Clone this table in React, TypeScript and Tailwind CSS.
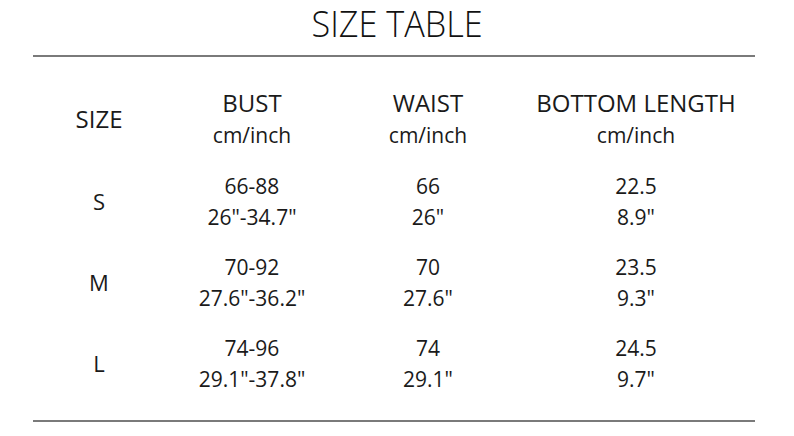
const rows = [
  { size: "S", bust: ["66-88", '26"-34.7"'], waist: ["66", '26"'], bottom: ["22.5", '8.9"'] },
  { size: "M", bust: ["70-92", '27.6"-36.2"'], waist: ["70", '27.6"'], bottom: ["23.5", '9.3"'] },
  { size: "L", bust: ["74-96", '29.1"-37.8"'], waist: ["74", '29.1"'], bottom: ["24.5", '9.7"'] },
];

const cols = "grid grid-cols-[132px_174px_178px_238px]";

function Cell({ lines }: { lines: string[] }) {
  return (
    <div className="flex flex-col items-center justify-center leading-[31px] text-[21px]">
      {lines.map((l, i) => (
        <span key={i}>{l}</span>
      ))}
    </div>
  );
}

export default function App() {
  return (
    <div className="w-[794px] h-[436px] bg-white text-[#1a1a1a] font-['Open_Sans',sans-serif]">
      {/* Title */}
      <div className="h-[55px] flex items-center justify-center pb-[8px]">
        <h1 className="inline-block scale-x-[0.95] font-['Open_Sans',sans-serif] font-light text-[36px] leading-none text-[#111]">
          SIZE TABLE
        </h1>
      </div>

      <div className="mx-[33px] w-[722px]">
        <div className="h-[2px] bg-[#7a7a7a]" />

        {/* Header */}
        <div className={`${cols} mt-[30px] h-[64px]`}>
          <div className="flex items-center justify-center text-[24px] font-medium">SIZE</div>
          {["BUST", "WAIST", "BOTTOM LENGTH"].map((h) => (
            <div key={h} className="flex flex-col items-center justify-center leading-[32px]">
              <span className="text-[24px] font-medium">{h}</span>
              <span className="text-[21px]">cm/inch</span>
            </div>
          ))}
        </div>

        {/* Rows */}
        <div className="mt-[10px]">
          {rows.map((r) => (
            <div key={r.size} className={`${cols} h-[81px]`}>
              <div className="flex items-center justify-center text-[22px]">{r.size}</div>
              <Cell lines={r.bust} />
              <Cell lines={r.waist} />
              <Cell lines={r.bottom} />
            </div>
          ))}
        </div>

        <div className="mt-[16px] h-[2px] bg-[#7a7a7a]" />
      </div>
    </div>
  );
}
